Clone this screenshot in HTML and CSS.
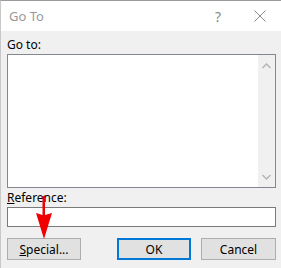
FILE: index.html
```html
<!DOCTYPE html>
<html lang="en">
<head>
  <meta charset="UTF-8">
  <title>Go To</title>
  <link rel="stylesheet" href="styles.css">
</head>
<body>
  <div class="window">
    <div class="titlebar">
      <span class="title">Go To</span>
      <span class="help">?</span>
      <svg class="close" width="12" height="12" viewBox="0 0 12 12">
        <path d="M0.5 0.5 L11.5 11.5 M11.5 0.5 L0.5 11.5" stroke="#8a8a8a" stroke-width="1" fill="none"/>
      </svg>
    </div>

    <div class="content">
      <label class="label first">Go to:</label>
      <div class="listbox">
        <div class="list-area"></div>
        <div class="scrollbar">
          <svg width="9" height="6" viewBox="0 0 9 6"><path d="M0.5 5 L4.5 1 L8.5 5" stroke="#b4b4b4" stroke-width="1.4" fill="none"/></svg>
          <svg width="9" height="6" viewBox="0 0 9 6"><path d="M0.5 1 L4.5 5 L8.5 1" stroke="#b4b4b4" stroke-width="1.4" fill="none"/></svg>
        </div>
      </div>

      <label class="label"><u>R</u>eference:</label>
      <div class="input"></div>

      <div class="buttons">
        <button class="btn"><u>S</u>pecial...</button>
        <button class="btn default">OK</button>
        <button class="btn">Cancel</button>
      </div>
    </div>

    <!-- red annotation arrow -->
    <svg class="arrow" width="18" height="44" viewBox="0 0 18 44">
      <path d="M7.5 0 L10 0 L10 19 L17 17 L9 43 L1 17 L7.5 19 Z" fill="#f00000"/>
    </svg>
  </div>
</body>
</html>
```

FILE: styles.css
```css
* {
  margin: 0; padding: 0; box-sizing: border-box;
}
body {
  background: #f0f0f0;
  font-family: 'Noto Sans', 'Open Sans', sans-serif;
  font-size: 12px;
  color: #000;
}
.window {
  position: relative;
  width: 281px;
  height: 268px;
  background: #f0f0f0;
  border-top: 1px solid #9a9a9a;
  border-left: 1px solid #c8c8c8;
}
.titlebar {
  height: 30px;
  background: #fff;
  display: flex;
  align-items: center;
}
.title {
  padding-left: 8px;
  font-size: 13px;
  color: #9a9a9a;
  flex: 1;
}
.help {
  color: #8a8a8a;
  font-size: 14px;
  margin-right: 33px;
}
.close {
  margin-right: 15px;
}
.content {
  padding: 0 5px 0 6px;
}
.label {
  display: block;
  line-height: 16px;
  margin-top: 2px;
}
.label.first {
  margin-top: 6px;
}
.listbox {
  display: flex;
  height: 134px;
  margin-top: 1px;
  border: 1px solid #828790;
  background: #fff;
}
.list-area {
  flex: 1;
}
.scrollbar {
  width: 17px;
  background: #f0f0f0;
  display: flex;
  flex-direction: column;
  justify-content: space-between;
  align-items: center;
  padding: 8px 0 7px;
}
.input {
  height: 20px;
  margin-top: 1px;
  border: 1px solid #7a7a7a;
  background: #fff;
}
.buttons {
  display: flex;
  margin-top: 11px;
}
.btn {
  height: 22px;
  width: 74px;
  background: #e1e1e1;
  border: 1px solid #adadad;
  font-family: inherit;
  font-size: 12px;
  color: #000;
}
.btn.default {
  margin-left: 36px;
  border: 2px solid #0078d7;
}
.btn:last-child {
  margin-left: 10px;
  width: 75px;
}
.arrow {
  position: absolute;
  left: 34px;
  top: 195px;
}
```
